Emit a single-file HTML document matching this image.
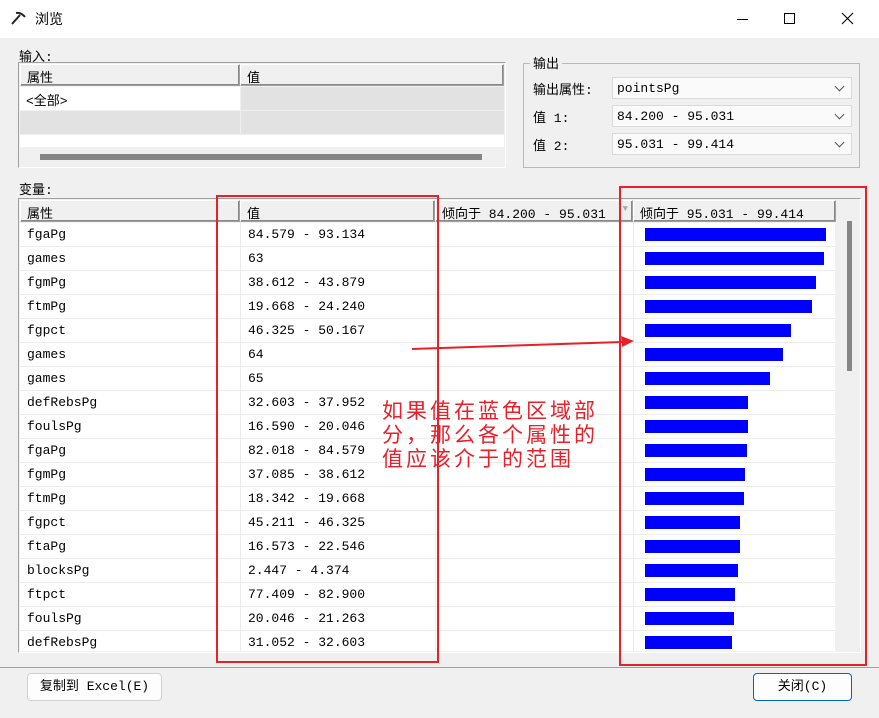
<!DOCTYPE html>
<html><head><meta charset="utf-8"><style>
*{margin:0;padding:0;box-sizing:border-box}
body{width:879px;height:718px;background:#f0f0f0;position:relative;overflow:hidden;font-family:"Liberation Mono","Noto Sans CJK SC",monospace;font-size:13px;color:#000}
.a{position:absolute}
.t{white-space:nowrap}
.hdr{position:absolute;height:22px;background:#f0f0f0;border:1px solid #a0a0a0;border-top-color:#fff;border-left-color:#fff;box-shadow:inset -1px -1px 0 #888;padding:2px 6px;white-space:nowrap}
.combo{position:absolute;left:612px;width:240px;height:22px;background:#fafafa;border:1px solid #d9d9d9;padding:3px 4px}
.combo:after{content:"";position:absolute;right:8px;top:5px;width:6px;height:6px;border-right:1px solid #555;border-bottom:1px solid #555;transform:rotate(45deg)}
.tbl{position:absolute;left:20px;top:223px;width:815px;height:428px;overflow:hidden;background:#fff}
.r{position:relative;height:24px;border-bottom:1px solid #ececec}
.r b{font-weight:normal;position:absolute;top:4px;white-space:nowrap}
.r i{position:absolute;top:5px;left:625px;height:13px;background:#0000ff}
.vl{position:absolute;top:0;width:1px;height:428px;background:#ececec}
.btn{position:absolute;height:28px;background:#fdfdfd;border:1px solid #d0d0d0;border-radius:4px;text-align:center;line-height:26px}
</style></head><body>
<div class="a" style="left:0;top:0;width:879px;height:38px;background:#fff"></div>
<svg class="a" style="left:10px;top:10px" width="18" height="16"><path d="M2 14 L10 5 M6 3 Q11 2 15 7" stroke="#223" stroke-width="2" fill="none"/></svg>
<div class="a t" style="left:35px;top:9px;font-size:14px;font-family:'Noto Sans CJK SC',sans-serif">浏览</div>
<div class="a" style="left:737px;top:19px;width:11px;height:1px;background:#000"></div>
<div class="a" style="left:784px;top:13px;width:11px;height:11px;border:1px solid #000"></div>
<svg class="a" style="left:841px;top:12px" width="13" height="13"><path d="M1 1L12 12M12 1L1 12" stroke="#000" stroke-width="1.1"/></svg>

<div class="a t" style="left:19px;top:46px">输入:</div>
<div class="a" style="left:18px;top:62px;width:488px;height:106px;border:1px solid #a0a0a0;border-right-color:#fff;border-bottom-color:#fff;background:#f0f0f0"></div>
<div class="hdr" style="left:20px;top:64px;width:220px">属性</div>
<div class="hdr" style="left:240px;top:64px;width:264px">值</div>
<div class="a" style="left:20px;top:87px;width:220px;height:23px;background:#fff;padding:3px 6px">&lt;全部&gt;</div>
<div class="a" style="left:241px;top:87px;width:263px;height:23px;background:#e2e2e2"></div>
<div class="a" style="left:20px;top:111px;width:220px;height:23px;background:#e2e2e2"></div>
<div class="a" style="left:241px;top:111px;width:263px;height:23px;background:#e2e2e2"></div>
<div class="a" style="left:20px;top:135px;width:484px;height:12px;background:#fff"></div>
<div class="a" style="left:40px;top:154px;width:442px;height:6px;background:#868686"></div>

<div class="a" style="left:523px;top:63px;width:337px;height:105px;border:1px solid #b8b8b8"></div>
<div class="a t" style="left:530px;top:53px;background:#f0f0f0;padding:0 3px">输出</div>
<div class="a t" style="left:533px;top:79px">输出属性:</div>
<div class="a t" style="left:533px;top:107px">值 1:</div>
<div class="a t" style="left:533px;top:135px">值 2:</div>
<div class="combo" style="top:77px">pointsPg</div>
<div class="combo" style="top:105px">84.200 - 95.031</div>
<div class="combo" style="top:133px">95.031 - 99.414</div>

<div class="a t" style="left:19px;top:179px">变量:</div>
<div class="a" style="left:18px;top:198px;width:843px;height:455px;border:1px solid #a0a0a0;border-right-color:#fff;border-bottom-color:#fff;background:#f0f0f0"></div>
<div class="hdr" style="left:20px;top:200px;width:220px">属性</div>
<div class="hdr" style="left:240px;top:200px;width:195px">值</div>
<div class="hdr" style="left:435px;top:200px;width:198px">倾向于 84.200 - 95.031<span style="position:absolute;right:4px;top:3px;color:#aaa;font-size:9px">▼</span></div>
<div class="hdr" style="left:633px;top:200px;width:203px">倾向于 95.031 - 99.414</div>
<div class="a" style="left:847px;top:221px;width:5px;height:150px;background:#868686"></div>

<div class="tbl">
<div class="vl" style="left:220px"></div><div class="vl" style="left:415px"></div><div class="vl" style="left:613px"></div>
<div class="r"><b style="left:7px">fgaPg</b><b style="left:228px">84.579 - 93.134</b><i style="width:181px"></i></div>
<div class="r"><b style="left:7px">games</b><b style="left:228px">63</b><i style="width:179px"></i></div>
<div class="r"><b style="left:7px">fgmPg</b><b style="left:228px">38.612 - 43.879</b><i style="width:171px"></i></div>
<div class="r"><b style="left:7px">ftmPg</b><b style="left:228px">19.668 - 24.240</b><i style="width:167px"></i></div>
<div class="r"><b style="left:7px">fgpct</b><b style="left:228px">46.325 - 50.167</b><i style="width:146px"></i></div>
<div class="r"><b style="left:7px">games</b><b style="left:228px">64</b><i style="width:138px"></i></div>
<div class="r"><b style="left:7px">games</b><b style="left:228px">65</b><i style="width:125px"></i></div>
<div class="r"><b style="left:7px">defRebsPg</b><b style="left:228px">32.603 - 37.952</b><i style="width:103px"></i></div>
<div class="r"><b style="left:7px">foulsPg</b><b style="left:228px">16.590 - 20.046</b><i style="width:103px"></i></div>
<div class="r"><b style="left:7px">fgaPg</b><b style="left:228px">82.018 - 84.579</b><i style="width:102px"></i></div>
<div class="r"><b style="left:7px">fgmPg</b><b style="left:228px">37.085 - 38.612</b><i style="width:100px"></i></div>
<div class="r"><b style="left:7px">ftmPg</b><b style="left:228px">18.342 - 19.668</b><i style="width:99px"></i></div>
<div class="r"><b style="left:7px">fgpct</b><b style="left:228px">45.211 - 46.325</b><i style="width:95px"></i></div>
<div class="r"><b style="left:7px">ftaPg</b><b style="left:228px">16.573 - 22.546</b><i style="width:95px"></i></div>
<div class="r"><b style="left:7px">blocksPg</b><b style="left:228px">2.447 - 4.374</b><i style="width:93px"></i></div>
<div class="r"><b style="left:7px">ftpct</b><b style="left:228px">77.409 - 82.900</b><i style="width:90px"></i></div>
<div class="r"><b style="left:7px">foulsPg</b><b style="left:228px">20.046 - 21.263</b><i style="width:89px"></i></div>
<div class="r"><b style="left:7px">defRebsPg</b><b style="left:228px">31.052 - 32.603</b><i style="width:87px"></i></div>
</div>

<div class="a" style="left:216px;top:195px;width:223px;height:468px;border:2px solid #e8202a"></div>
<div class="a" style="left:619px;top:186px;width:248px;height:480px;border:2px solid #e8202a"></div>
<svg class="a" style="left:0;top:0" width="879" height="718"><line x1="412" y1="349" x2="622" y2="342" stroke="#e8202a" stroke-width="2"/><path d="M634 341 L621 336 L622 347 Z" fill="#e8202a"/></svg>
<div class="a t" style="left:382px;top:398px;color:#e8202a;font-family:'Noto Sans CJK SC',sans-serif;font-size:21px;line-height:24px;letter-spacing:3px">如果值在蓝色区域部<br>分，那么各个属性的<br>值应该介于的范围</div>

<div class="a" style="left:0;top:667px;width:879px;height:1px;background:#a0a0a0"></div>
<div class="btn" style="left:27px;top:673px;width:135px">复制到 Excel(E)</div>
<div class="btn" style="left:753px;top:673px;width:99px;border:1px solid #0067c0">关闭(C)</div>
</body></html>
